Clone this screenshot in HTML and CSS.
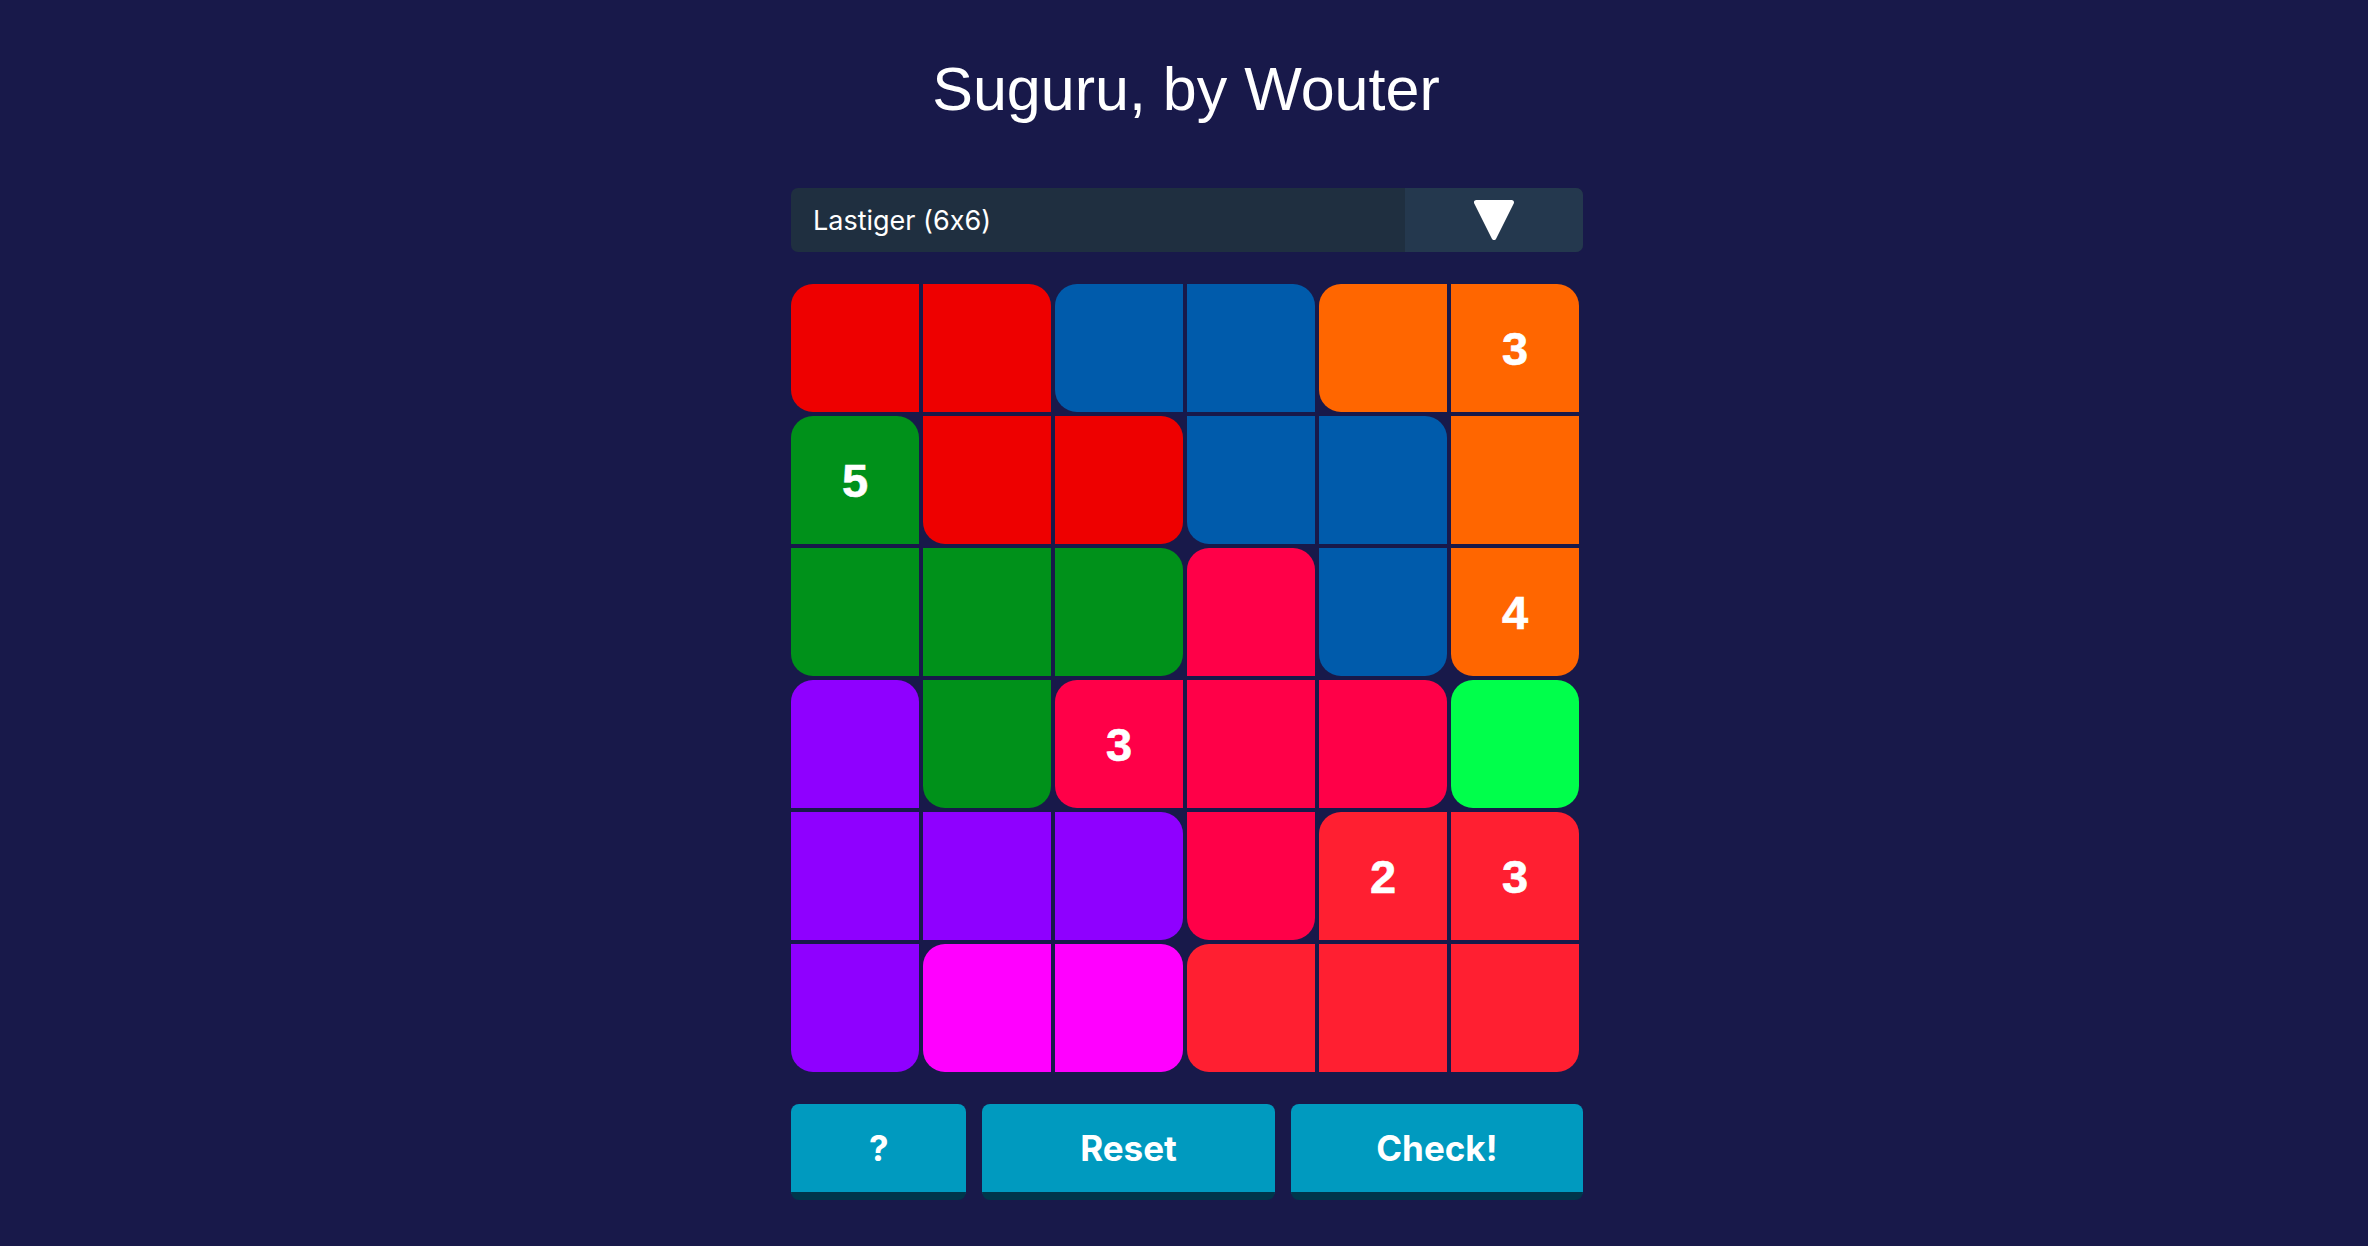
FILE: index.html
```html
<!DOCTYPE html>
<html lang="en">
<head>
<meta charset="utf-8">
<title>Suguru, by Wouter</title>
<link rel="stylesheet" href="styles.css">
</head>
<body>
<h1 class="title">Suguru, by Wouter</h1>
<main class="app">
  <div class="select">
    <span class="select-label">Lastiger (6x6)</span>
    <span class="select-arrow">
      <svg width="40" height="40" viewBox="0 0 40 40" aria-hidden="true"><polygon points="2.5,2.5 37.5,2.5 20,37.5" fill="#fff" stroke="#fff" stroke-width="5" stroke-linejoin="round"/></svg>
    </span>
  </div>
  <div class="board">
    <div class="cell red tl bl"></div>
    <div class="cell red tr"></div>
    <div class="cell blue tl bl"></div>
    <div class="cell blue tr"></div>
    <div class="cell orange tl bl"></div>
    <div class="cell orange tr">3</div>

    <div class="cell green tl tr">5</div>
    <div class="cell red bl"></div>
    <div class="cell red tr br"></div>
    <div class="cell blue bl"></div>
    <div class="cell blue tr"></div>
    <div class="cell orange"></div>

    <div class="cell green bl"></div>
    <div class="cell green"></div>
    <div class="cell green tr br"></div>
    <div class="cell crimson tl tr"></div>
    <div class="cell blue bl br"></div>
    <div class="cell orange bl br">4</div>

    <div class="cell violet tl tr"></div>
    <div class="cell green bl br"></div>
    <div class="cell crimson tl bl">3</div>
    <div class="cell crimson"></div>
    <div class="cell crimson tr br"></div>
    <div class="cell lime tl tr bl br"></div>

    <div class="cell violet"></div>
    <div class="cell violet"></div>
    <div class="cell violet tr br"></div>
    <div class="cell crimson bl br"></div>
    <div class="cell scarlet tl">2</div>
    <div class="cell scarlet tr">3</div>

    <div class="cell violet bl br"></div>
    <div class="cell magenta tl bl"></div>
    <div class="cell magenta tr br"></div>
    <div class="cell scarlet tl bl"></div>
    <div class="cell scarlet"></div>
    <div class="cell scarlet br"></div>
  </div>
  <div class="actions">
    <button class="btn btn-small">?</button>
    <button class="btn btn-wide">Reset</button>
    <button class="btn btn-wide">Check!</button>
  </div>
</main>
</body>
</html>
```
FILE: styles.css
```css
* { box-sizing: border-box; }

html, body {
  margin: 0;
  padding: 0;
}

body {
  background: #18194a;
  min-height: 100vh;
  color: #fff;
  font-family: "Liberation Sans", Arial, sans-serif;
}

.title {
  margin: 0;
  padding-top: 58px;
  padding-left: 4px;
  font-family: "Liberation Sans", Arial, sans-serif;
  font-weight: normal;
  font-size: 61px;
  line-height: 62px;
  text-align: center;
  color: #fff;
}

.app {
  width: 798px;
  padding-left: 6px;
  margin: 68px auto 0;
}

.select {
  display: flex;
  width: 792px;
  height: 64px;
  border-radius: 7px;
  overflow: hidden;
  background: #1f2f40;
}

.select-label {
  flex: 1;
  display: flex;
  align-items: center;
  padding-left: 22px;
  font-family: "Inter", "Noto Sans", sans-serif;
  font-feature-settings: "calt" 0;
  font-size: 27px;
  color: #fff;
}

.select-arrow {
  width: 178px;
  display: flex;
  align-items: center;
  justify-content: center;
  background: #24384e;
}

.board {
  margin-top: 32px;
  display: grid;
  grid-template-columns: repeat(6, 128px);
  grid-auto-rows: 128px;
  gap: 4px;
  width: 788px;
}

.cell {
  display: flex;
  align-items: center;
  justify-content: center;
  font-family: "Liberation Sans", Arial, sans-serif;
  font-weight: bold;
  font-size: 47px;
  color: #fff;
  -webkit-text-stroke: 0.6px #fff;
}

.tl { border-top-left-radius: 22px; }
.tr { border-top-right-radius: 22px; }
.bl { border-bottom-left-radius: 22px; }
.br { border-bottom-right-radius: 22px; }

.red { background: #ee0000; }
.blue { background: #005bab; }
.orange { background: #ff6600; }
.green { background: #00911a; }
.crimson { background: #ff0048; }
.violet { background: #8f00ff; }
.lime { background: #00ff4b; }
.magenta { background: #ff00ff; }
.scarlet { background: #ff1f31; }

.actions {
  margin-top: 32px;
  display: flex;
  gap: 16px;
  width: 792px;
}

.btn {
  height: 96px;
  border: none;
  border-bottom: 8px solid #00354a;
  border-radius: 8px;
  background: #009abf;
  color: #fff;
  font-family: "Inter", "Noto Sans", sans-serif;
  font-weight: 700;
  font-size: 35px;
  padding: 0;
  cursor: pointer;
}

.btn-small { flex: 3; }
.btn-wide { flex: 5; }
```
